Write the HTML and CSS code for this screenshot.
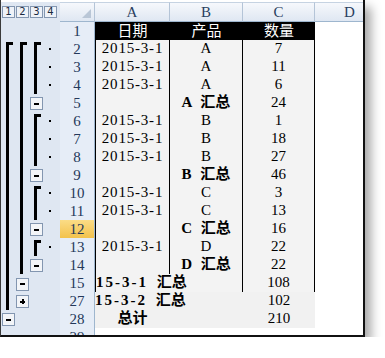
FILE: index.html
```html
<!DOCTYPE html>
<html lang="zh">
<head>
    <meta charset="UTF-8">
    <title>分类汇总</title>
    <link rel="stylesheet" href="styles.css">
</head>
<body>

<div class="window">
    <!-- column header with outline level buttons -->
    <div class="row head">
        <div class="lvl"><span>1</span></div>
        <div class="lvl"><span>2</span></div>
        <div class="lvl"><span>3</span></div>
        <div class="lvl"><span>4</span></div>
        <div class="corner"><span class="tri"></span></div>
        <div class="col">A</div>
        <div class="col">B</div>
        <div class="col">C</div>
        <div class="col">D</div>
    </div>

    <div class="row">
        <div class="g"></div><div class="g"></div><div class="g"></div><div class="g"></div>
        <div class="rh">1</div>
        <div class="c hd">日期</div><div class="c hd">产品</div><div class="c hd">数量</div><div class="c d"></div>
    </div>

    <div class="row t">
        <div class="g ln top"></div><div class="g ln top"></div><div class="g ln top"></div><div class="g dot"></div>
        <div class="rh">2</div>
        <div class="c a">2015-3-1</div><div class="c">A</div><div class="c">7</div><div class="c d"></div>
    </div>
    <div class="row t">
        <div class="g ln"></div><div class="g ln"></div><div class="g ln"></div><div class="g dot"></div>
        <div class="rh">3</div>
        <div class="c a">2015-3-1</div><div class="c">A</div><div class="c">11</div><div class="c d"></div>
    </div>
    <div class="row t">
        <div class="g ln"></div><div class="g ln"></div><div class="g ln"></div><div class="g dot"></div>
        <div class="rh">4</div>
        <div class="c a">2015-3-1</div><div class="c">A</div><div class="c">6</div><div class="c d"></div>
    </div>
    <div class="row t">
        <div class="g ln"></div><div class="g ln"></div><div class="g btn minus"><span></span></div><div class="g"></div>
        <div class="rh">5</div>
        <div class="c a"></div><div class="c sum">A 汇总</div><div class="c">24</div><div class="c d"></div>
    </div>

    <div class="row t">
        <div class="g ln"></div><div class="g ln"></div><div class="g ln top"></div><div class="g dot"></div>
        <div class="rh">6</div>
        <div class="c a">2015-3-1</div><div class="c">B</div><div class="c">1</div><div class="c d"></div>
    </div>
    <div class="row t">
        <div class="g ln"></div><div class="g ln"></div><div class="g ln"></div><div class="g dot"></div>
        <div class="rh">7</div>
        <div class="c a">2015-3-1</div><div class="c">B</div><div class="c">18</div><div class="c d"></div>
    </div>
    <div class="row t">
        <div class="g ln"></div><div class="g ln"></div><div class="g ln"></div><div class="g dot"></div>
        <div class="rh">8</div>
        <div class="c a">2015-3-1</div><div class="c">B</div><div class="c">27</div><div class="c d"></div>
    </div>
    <div class="row t">
        <div class="g ln"></div><div class="g ln"></div><div class="g btn minus"><span></span></div><div class="g"></div>
        <div class="rh">9</div>
        <div class="c a"></div><div class="c sum">B 汇总</div><div class="c">46</div><div class="c d"></div>
    </div>

    <div class="row t">
        <div class="g ln"></div><div class="g ln"></div><div class="g ln top"></div><div class="g dot"></div>
        <div class="rh">10</div>
        <div class="c a">2015-3-1</div><div class="c">C</div><div class="c">3</div><div class="c d"></div>
    </div>
    <div class="row t">
        <div class="g ln"></div><div class="g ln"></div><div class="g ln"></div><div class="g dot"></div>
        <div class="rh">11</div>
        <div class="c a">2015-3-1</div><div class="c">C</div><div class="c">13</div><div class="c d"></div>
    </div>
    <div class="row t">
        <div class="g ln"></div><div class="g ln"></div><div class="g btn minus"><span></span></div><div class="g"></div>
        <div class="rh sel">12</div>
        <div class="c a"></div><div class="c sum">C 汇总</div><div class="c">16</div><div class="c d"></div>
    </div>

    <div class="row t">
        <div class="g ln"></div><div class="g ln"></div><div class="g ln top"></div><div class="g dot"></div>
        <div class="rh">13</div>
        <div class="c a">2015-3-1</div><div class="c">D</div><div class="c">22</div><div class="c d"></div>
    </div>
    <div class="row t">
        <div class="g ln"></div><div class="g ln"></div><div class="g btn minus"><span></span></div><div class="g"></div>
        <div class="rh">14</div>
        <div class="c a"></div><div class="c sum">D 汇总</div><div class="c">22</div><div class="c d"></div>
    </div>

    <div class="row t">
        <div class="g ln"></div><div class="g btn minus"><span></span></div><div class="g"></div><div class="g"></div>
        <div class="rh hidden-after">15</div>
        <div class="c a wide sum"><span class="dt">15-3-1</span> 汇总</div><div class="c">108</div><div class="c d"></div>
    </div>
    <div class="row s">
        <div class="g ln"></div><div class="g btn plus"><span></span></div><div class="g"></div><div class="g"></div>
        <div class="rh">27</div>
        <div class="c wide sum"><span class="dt">15-3-2</span> 汇总</div><div class="c">102</div><div class="c d"></div>
    </div>
    <div class="row s">
        <div class="g btn minus"><span></span></div><div class="g"></div><div class="g"></div><div class="g"></div>
        <div class="rh">28</div>
        <div class="c sum">总计</div><div class="c"></div><div class="c">210</div><div class="c d"></div>
    </div>
    <div class="row">
        <div class="g"></div><div class="g"></div><div class="g"></div><div class="g"></div>
        <div class="rh">29</div>
        <div class="c d"></div><div class="c d"></div><div class="c d"></div><div class="c d"></div>
    </div>
</div>

</body>
</html>
```

FILE: styles.css
```css
/* General Styling */
body {
    margin: 0;
    background-color: #ffffff;
    font-family: "Liberation Serif", "Noto Sans CJK SC", serif;
    font-size: 15px;
    color: #000;
}
.window {
    width: 365px;
    height: 337px;
    box-sizing: border-box;
    padding-top: 2px;
    overflow: hidden;
    background-color: #ffffff;
    border-left: 1px solid #3a3a3a;
    border-right: 2px solid #111;
    border-bottom: 2px solid #111;
    box-shadow: 6px 7px 10px rgba(0,0,0,0.35);
}

/* one sheet row: 4 outline levels, row header, columns A-D */
.row {
    display: grid;
    grid-template-columns: 14px 14px 14px 17px 35px 75px 73px 72px 70px;
    height: 18px;
}
.row.head {
    height: 20px;
}

/* outline gutter */
.g, .lvl {
    background-color: #dfe7f2;
}
.ln {
    background: linear-gradient(#000, #000) 5px 0 / 3px 100% no-repeat, #dfe7f2;
}
.ln.top {
    background:
        linear-gradient(#000, #000) 5px 2px / 3px 100% no-repeat,
        linear-gradient(#000, #000) 5px 2px / 7px 3px no-repeat,
        #dfe7f2;
}
.dot {
    background: linear-gradient(#000, #000) 6px 8px / 2px 2px no-repeat, #dfe7f2;
}
.btn, .lvl {
    display: flex;
    align-items: center;
}
.btn span, .lvl span {
    margin-left: 1px;
    width: 13px;
    height: 13px;
    box-sizing: border-box;
    border: 1px solid #8396b0;
}
.minus span {
    background: linear-gradient(#000, #000) center / 5px 2px no-repeat, #f3f5f8;
}
.plus span {
    background:
        linear-gradient(#000, #000) center / 5px 2px no-repeat,
        linear-gradient(#000, #000) center / 2px 5px no-repeat,
        #f3f5f8;
}
.lvl span {
    height: 12px;
    background-color: #eef2f8;
    font: 10px/10px "DejaVu Sans", sans-serif;
    color: #1b2a40;
    text-align: center;
}

/* headers */
.corner, .col {
    border-top: 1px solid #c6d3e2;
    border-bottom: 1px solid #9eb6ce;
    background: linear-gradient(#f6f8fc, #dfe7f2);
    box-sizing: border-box;
}
.corner {
    display: flex;
    justify-content: flex-end;
    align-items: flex-end;
    border-right: 1px solid #b4c4d7;
    padding: 0 3px 3px 0;
}
.tri {
    width: 0;
    height: 0;
    border-left: 9px solid transparent;
    border-bottom: 9px solid #b9c6d6;
}
.col {
    border-right: 1px solid #b4c4d7;
    text-align: center;
    line-height: 18px;
    color: #2a3f5f;
}
.rh {
    background-color: #e6edf7;
    border-right: 1px solid #9eb6ce;
    border-bottom: 1px solid #c3d1e2;
    box-sizing: border-box;
    text-align: center;
    line-height: 18px;
    color: #24385a;
}
.rh.sel {
    background: linear-gradient(#fbdc86, #f3c24c);
    border-bottom-color: #d9a93a;
}
.rh.hidden-after {
    border-bottom: 2px solid #8ea6c2;
}

/* cells */
.c {
    box-sizing: border-box;
    line-height: 17px;
    text-align: center;
    white-space: nowrap;
}
.c.d {
    background-color: #ffffff;
}
.c.hd {
    background-color: #000;
    color: #fff;
    line-height: 18px;
}
.t .c:not(.d) {
    background-color: #f3f3f3;
    border-right: 1px solid #000;
    border-bottom: 1px solid #000;
}
.t .c.a {
    border-left: 1px solid #000;
    letter-spacing: 0.8px;
}
.s .c:not(.d) {
    background-color: #f1f1f1;
}
.sum {
    font-weight: bold;
    word-spacing: 5px;
}
.wide {
    grid-column: span 2;
    text-align: left;
}
.t .c.wide {
    letter-spacing: 0;
}
.dt {
    letter-spacing: 2px;
}
```
